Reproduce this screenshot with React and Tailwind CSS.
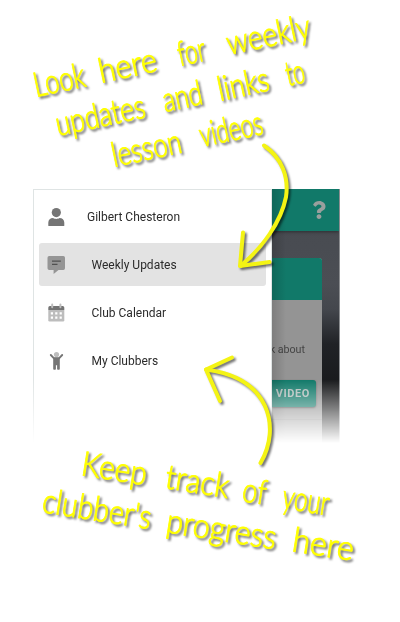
import React from "react";
import { FaQuestion } from "react-icons/fa";

const words = [
  ["Look", 36, 97, 52, -12],
  ["here", 101, 83, 59, -12],
  ["for", 180, 66, 28, -12],
  ["weekly", 229, 55, 85, -12],
  ["updates", 58, 136, 91, -12],
  ["and", 165, 112, 40, -12],
  ["links", 220, 101, 52, -12],
  ["to", 288, 86, 19, -12],
  ["lesson", 114, 167, 71, -12],
  ["videos", 202, 147, 64, -12],
  ["Keep", 80, 475, 66, 9],
  ["track", 164, 488, 64, 9],
  ["of", 241, 501, 24, 9],
  ["your", 281, 508, 47, 9],
  ["clubber's", 41, 512, 110, 9],
  ["progress", 165, 532, 111, 9],
  ["here", 291, 551, 62, 9],
];

function PersonIcon() {
  return (
    <svg width="18" height="20" viewBox="0 0 18 20" fill="#757575">
      <circle cx="9.300" cy="5.600" r="4.600" />
      <path d="M1.300 18.500v-2.700C1.300 12.800 3.300 11 6.100 11c1.100.7 2 .9 3.200.9s2.100-.2 3.200-.9c2.800 0 4.800 1.800 4.800 4.800v2.700q0 .5-.6.5H1.900q-.6 0-.6-.5z" />
    </svg>
  );
}

function MessageIcon() {
  return (
    <svg width="18" height="20" viewBox="0 0 18 20">
      <path d="M2.200 1h14.100Q18 1 18 2.700v10.600q0 1.700-1.700 1.700h-4.800L6.600 19v-4H2.200Q.5 15 .5 13.300V2.700Q.5 1 2.200 1z" fill="#959595" />
      <path d="M5 6.200h8.800M5 9.300h5.500" stroke="#505050" strokeWidth="1.300" />
    </svg>
  );
}

function CalendarIcon() {
  return (
    <svg width="18" height="20" viewBox="0 0 18 20">
      <path d="M1.300 7h16v10.200q0 1.300-1.300 1.300H2.600q-1.300 0-1.300-1.300z" fill="#bdbdbd" />
      <path d="M1.300 7V4.700q0-1.700 1.600-1.700h12.800q1.600 0 1.600 1.700V7z" fill="#747474" />
      <path d="M5.200 1.500v2.800M13.400 1.500v2.800" stroke="#bdbdbd" strokeWidth="2" strokeLinecap="round" />
      <path d="M3.800 9.200H6v2.200H3.800zM8.200 9.200h2.200v2.200H8.200zM12.600 9.200h2.200v2.200h-2.200zM3.800 13.600H6v2.200H3.800zM8.200 13.600h2.200v2.200H8.200zM12.600 13.600h2.200v2.200h-2.200z" fill="#fff" />
    </svg>
  );
}

function ChildIcon() {
  return (
    <svg width="18" height="20" viewBox="0 0 18 20">
      <circle cx="9.500" cy="3.500" r="2.600" fill="#bdbdbd" />
      <path d="M3.800 4 7 7.300h5L15.200 4" fill="none" stroke="#757575" strokeWidth="1.900" strokeLinecap="round" strokeLinejoin="round" />
      <path d="M6.200 6.800h6.600v11.100q0 .8-.8.8h-1.100q-.8 0-.8-.8v-3.600H8.900v3.600q0 .8-.8.8H7q-.8 0-.8-.8z" fill="#757575" />
    </svg>
  );
}

function MenuRow({ icon, label, active, first }) {
  return (
    <div className={"flex h-[43px] items-center rounded-[3px] pl-2 " + (active ? "bg-[#e3e3e3]" : "")}>
      <div className="w-[18px] shrink-0">{icon}</div>
      <span className={"whitespace-nowrap text-[12px] leading-4 text-[#2b2b2b] " + (first ? "ml-[22px]" : "ml-[26.500px]")}>
        {label}
      </span>
    </div>
  );
}

function Annotations() {
  return (
    <svg
      className="pointer-events-none absolute inset-0 [filter:drop-shadow(2px_2px_1px_rgba(0,0,0,0.55))]"
      width="400"
      height="622"
      viewBox="0 0 400 622"
    >
      <g fill="#ffff00" stroke="#ffff00" strokeWidth="0.9" fontFamily="Lato, sans-serif" fontSize="34" fontWeight="300">
        {words.map(([word, x, y, length, angle]) => (
          <text
            key={word + x}
            textLength={length}
            lengthAdjust="spacingAndGlyphs"
            transform={`translate(${x} ${y}) rotate(${angle})`}
          >
            {word}
          </text>
        ))}
      </g>
      <g fill="none" stroke="#f4f414" strokeWidth="4" strokeLinecap="round" strokeLinejoin="round">
        <path d="M264 145.500C282 158 289 177 286 197C281 222 263 247 240.500 266" />
        <path d="M243 232.500 240 266 269.500 262" />
        <path d="M260.500 463C271 445 273 424 265 406C255 384 232 373 206 369.500" />
        <path d="M232 357.500 206 369.500 220 401" />
      </g>
    </svg>
  );
}

export default function App() {
  return (
    <main className="relative h-[622px] w-[400px] overflow-hidden bg-white pl-[33px] pt-[189px] font-['Roboto',sans-serif]">
      <div className="flex h-[254px] w-[307px] [mask-image:linear-gradient(to_bottom,#000_75%,transparent_100%)]">
        <nav className="flex w-[239px] shrink-0 flex-col gap-[5px] border-l border-t border-r border-[#dfe4e4] bg-white pl-[5px] pr-[5px] pt-[5px]">
          <MenuRow icon={<PersonIcon />} label="Gilbert Chesteron" first />
          <MenuRow icon={<MessageIcon />} label="Weekly Updates" active />
          <MenuRow icon={<CalendarIcon />} label="Club Calendar" />
          <MenuRow icon={<ChildIcon />} label="My Clubbers" />
        </nav>
        <section className="relative flex w-[68px] flex-col overflow-hidden border-r border-[#8b8d90] bg-[linear-gradient(to_bottom,#46494f_0px,#4b4e54_95px,#44474d_120px,#202226_155px,#18191b_200px,#111_254px)]">
          <header className="flex h-[42px] shrink-0 items-center justify-end bg-[#117969] pr-[13px] shadow-[0_1px_3px_rgba(0,0,0,0.4)]">
            <FaQuestion className="h-[18px] w-[14px] text-[#999f9d]" />
          </header>
          <article className="mt-[27px] flex w-[50px] grow flex-col overflow-hidden rounded-tr-[3px] bg-[#949494]">
            <div className="h-[42px] shrink-0 bg-[#117969]" />
            <p className="mr-[17px] mt-[42px] flex h-4 shrink-0 justify-end whitespace-nowrap text-[10.700px] leading-4 text-[#444]">
              k about
            </p>
            <div className="mt-[22px] flex h-[27px] w-[44px] shrink-0 items-center justify-end rounded-r-[3px] bg-[#117969] pr-[6px] pt-px text-[11px] font-bold tracking-[0.600px] text-[#b0bcba] shadow-[0_1px_2px_rgba(0,0,0,0.5)]">
              VIDEO
            </div>
            <div className="mt-3 border-t border-[#858585]" />
          </article>
          <div className="pointer-events-none absolute inset-y-0 left-0 w-[14px] bg-gradient-to-r from-black/15 to-transparent" />
        </section>
      </div>
      <Annotations />
    </main>
  );
}
